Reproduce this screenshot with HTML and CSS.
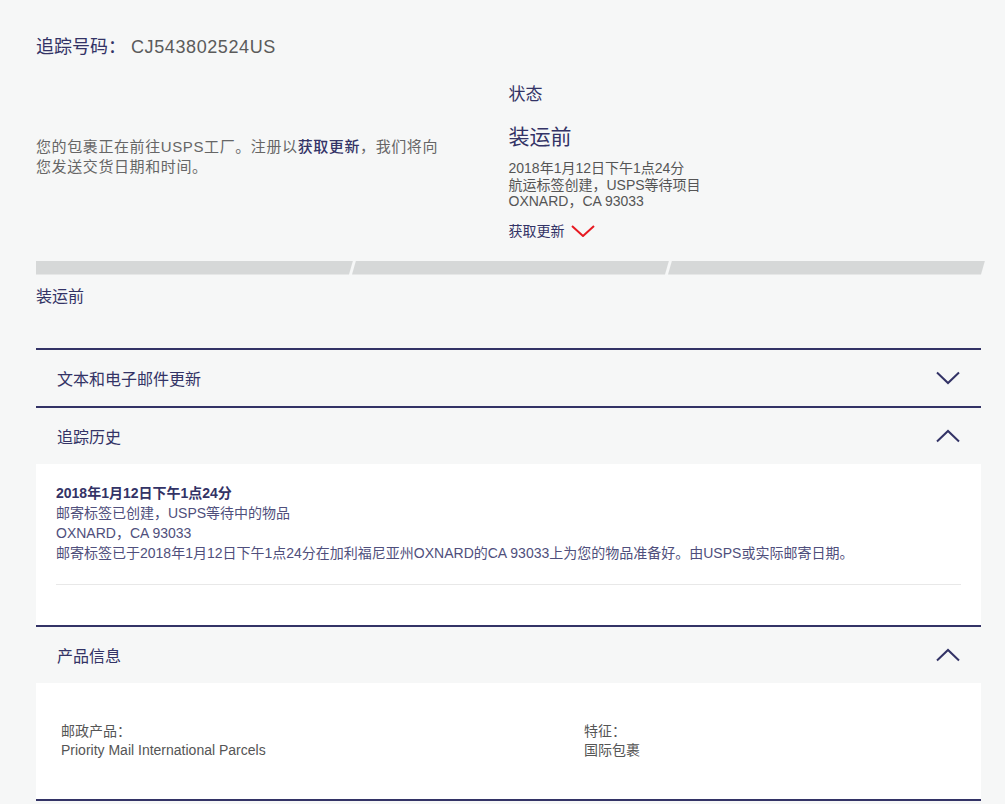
FILE: index.html
```html
<!DOCTYPE html>
<html lang="zh-CN">
<head>
    <meta charset="UTF-8">
    <meta name="viewport" content="width=device-width, initial-scale=1.0">
    <title>追踪</title>
    <link rel="stylesheet" href="styles.css">
</head>
<body>
    <main class="page">
        <div class="track-head">
            <h1><span class="label">追踪号码：</span><span class="number">CJ543802524US</span></h1>
        </div>

        <div class="status">
            <div class="status-left">
                <p>您的包裹正在前往USPS工厂。注册以<a href="#">获取更新</a>，我们将向您发送交货日期和时间。</p>
            </div>
            <div class="status-right">
                <h2>状态</h2>
                <h3>装运前</h3>
                <div class="detail">
                    <p>2018年1月12日下午1点24分</p>
                    <p>航运标签创建，USPS等待项目</p>
                    <p>OXNARD，CA 93033</p>
                </div>
                <a class="updates" href="#">获取更新
                    <svg width="24" height="12" viewBox="0 0 24 12"><polyline points="1,1 12,11 23,1" fill="none" stroke="#e71921" stroke-width="2"/></svg>
                </a>
            </div>
        </div>

        <div class="progress">
            <div class="seg first"></div>
            <div class="seg"></div>
            <div class="seg"></div>
        </div>
        <p class="progress-label">装运前</p>

        <!-- accordion -->
        <div class="acc">
            <div class="acc-item">
                <div class="acc-head">
                    <span>文本和电子邮件更新</span>
                    <svg width="24" height="14" viewBox="0 0 24 14"><polyline points="1,1.5 12,12 23,1.5" fill="none" stroke="#333366" stroke-width="2"/></svg>
                </div>
            </div>
            <div class="acc-item">
                <div class="acc-head">
                    <span>追踪历史</span>
                    <svg width="24" height="14" viewBox="0 0 24 14"><polyline points="1,12.5 12,2 23,12.5" fill="none" stroke="#333366" stroke-width="2"/></svg>
                </div>
                <div class="acc-body history">
                    <p class="date">2018年1月12日下午1点24分</p>
                    <p>邮寄标签已创建，USPS等待中的物品</p>
                    <p>OXNARD，CA 93033</p>
                    <p>邮寄标签已于2018年1月12日下午1点24分在加利福尼亚州OXNARD的CA 93033上为您的物品准备好。由USPS或实际邮寄日期。</p>
                    <hr>
                </div>
            </div>
            <div class="acc-item">
                <div class="acc-head">
                    <span>产品信息</span>
                    <svg width="24" height="14" viewBox="0 0 24 14"><polyline points="1,12.5 12,2 23,12.5" fill="none" stroke="#333366" stroke-width="2"/></svg>
                </div>
                <div class="acc-body product">
                    <div>
                        <p>邮政产品：</p>
                        <p>Priority Mail International Parcels</p>
                    </div>
                    <div>
                        <p>特征：</p>
                        <p>国际包裹</p>
                    </div>
                </div>
            </div>
        </div>
    </main>
</body>
</html>
```

FILE: styles.css
```css
body{
    margin: 0;
    background-color: #f6f7f7;
    font-family: "Liberation Sans", "Noto Sans CJK SC", sans-serif;
    color: #333366;
}
p{
    margin: 0;
}
a{
    color: #333366;
    text-decoration: none;
}
.page{
    width: 945px;
    padding: 35px 24px 0 36px;
}
/* numero de seguimiento */
.track-head h1{
    margin: 0;
    font-size: 18px;
    line-height: 24px;
    font-weight: normal;
}
.track-head .label{
    color: #333366;
}
.track-head .number{
    color: #5b5b5b;
    margin-left: 5px;
    letter-spacing: 0.6px;
}
.status{
    display: grid;
    grid-template-columns: 1fr 1fr;
    margin-top: 24px;
}
.status-left p{
    margin-top: 54px;
    width: 410px;
    font-size: 15px;
    line-height: 20px;
    letter-spacing: 0.6px;
    color: #666666;
}
.status-left a{
    font-weight: 500;
}
.status-right h2{
    margin: 0;
    font-size: 17px;
    line-height: 24px;
    font-weight: normal;
}
.status-right h3{
    margin: 16px 0 0;
    font-size: 21px;
    line-height: 28px;
    font-weight: normal;
}
.detail{
    margin-top: 9px;
    font-size: 14px;
    line-height: 16.5px;
    color: #555555;
}
.updates{
    display: flex;
    align-items: center;
    gap: 6px;
    margin-top: 12px;
    font-size: 14px;
    line-height: 18px;
}
.progress{
    display: flex;
    margin: 21px -4px 0 0;
    height: 14px;
}
.seg{
    flex: 1;
    background-color: #d6d8d8;
    margin-left: -1px;
    clip-path: polygon(4px 0, 100% 0, calc(100% - 4px) 100%, 0 100%);
}
.seg.first{
    margin-left: 0;
    clip-path: polygon(0 0, 100% 0, calc(100% - 4px) 100%, 0 100%);
}
.progress-label{
    margin-top: 12px;
    font-size: 16px;
    line-height: 20px;
}
.acc{
    margin-top: 41px;
    border-bottom: 2px solid #333366;
}
.acc-item{
    border-top: 2px solid #333366;
}
.acc-head{
    display: flex;
    justify-content: space-between;
    align-items: center;
    height: 56px;
    padding: 0 21px 0 21px;
    font-size: 16px;
}
.acc-body{
    background-color: #ffffff;
}
.history{
    padding: 19px 20px 40px;
    font-size: 14px;
    line-height: 20px;
    color: #4f4f7c;
}
.history .date{
    font-weight: bold;
    color: #333366;
}
.history hr{
    margin: 21px 0 0;
    border: none;
    border-top: 1px solid #e8e8e8;
}
.product{
    display: grid;
    grid-template-columns: 523px 1fr;
    padding: 39px 25px 39px;
    font-size: 14px;
    line-height: 19px;
    color: #555555;
}
```
